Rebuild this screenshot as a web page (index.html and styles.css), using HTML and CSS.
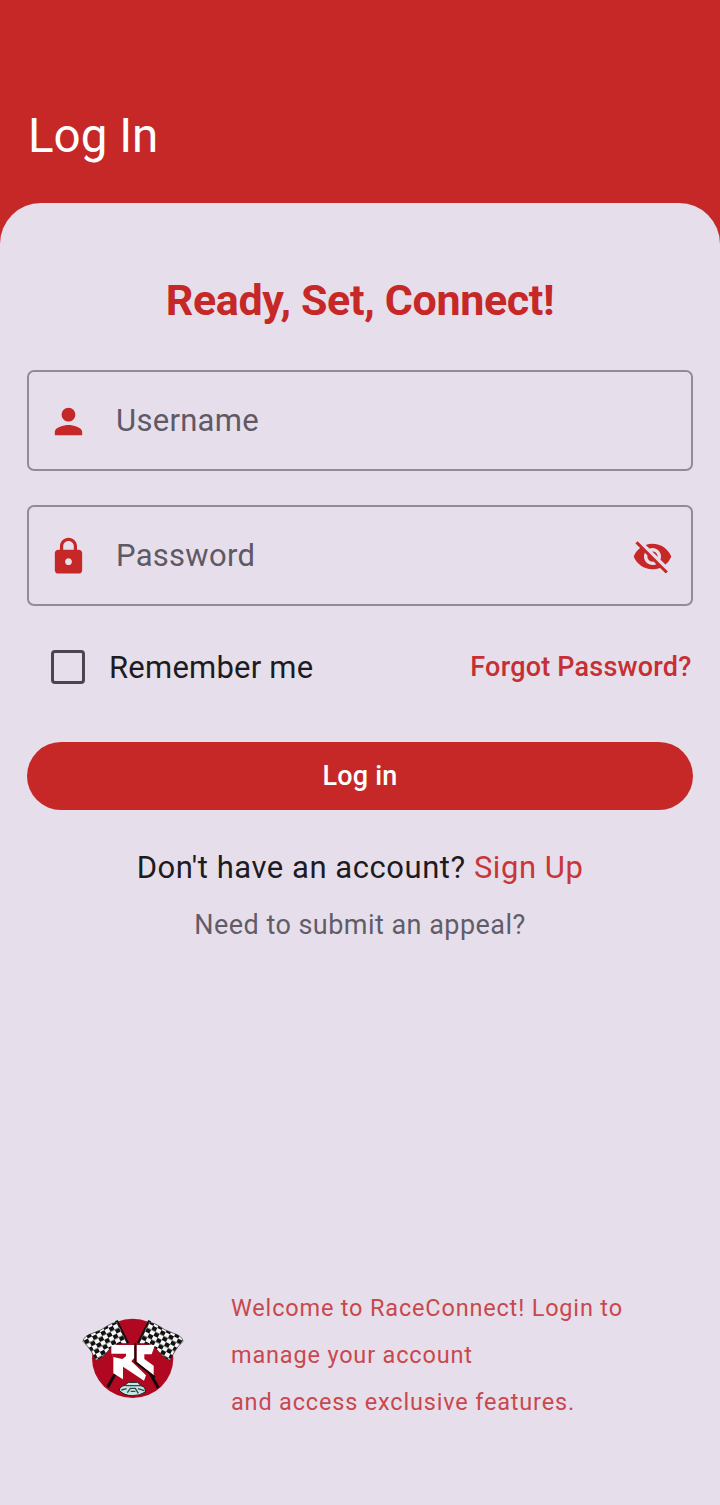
FILE: index.html
```
<!DOCTYPE html>
<html lang="en">
<head>
<meta charset="utf-8">
<title>Log In</title>
<link rel="stylesheet" href="styles.css">
</head>
<body>
<div class="screen">
  <header class="header"><h1 class="header-title">Log In</h1></header>
  <main class="card">
    <h2 class="tagline">Ready, Set, Connect!</h2>
    <div class="field">
      <svg class="icon" viewBox="0 0 24 24"><path d="M12 12c2.21 0 4-1.79 4-4s-1.79-4-4-4-4 1.79-4 4 1.79 4 4 4zm0 2c-2.67 0-8 1.34-8 4v2h16v-2c0-2.66-5.33-4-8-4z"/></svg>
      <span class="field-label">Username</span>
    </div>
    <div class="field">
      <svg class="icon" viewBox="0 0 24 24"><path d="M18 8h-1V6c0-2.76-2.24-5-5-5S7 3.24 7 6v2H6c-1.1 0-2 .9-2 2v10c0 1.1.9 2 2 2h12c1.1 0 2-.9 2-2V10c0-1.100-.9-2-2-2zm-6 9c-1.100 0-2-.9-2-2s.9-2 2-2 2 .9 2 2-.9 2-2 2zm3.100-9H8.900V6c0-1.710 1.390-3.100 3.100-3.100s3.100 1.390 3.100 3.100v2z"/></svg>
      <span class="field-label">Password</span>
      <svg class="icon" viewBox="0 0 24 24"><path d="M12 7c2.760 0 5 2.240 5 5 0 .65-.13 1.260-.36 1.830l2.920 2.920c1.510-1.260 2.700-2.890 3.430-4.750-1.730-4.390-6-7.500-11-7.500-1.400 0-2.740.25-3.980.7l2.160 2.160C10.740 7.130 11.350 7 12 7zM2 4.270l2.280 2.280.46.46C3.080 8.300 1.780 10.020 1 12c1.730 4.390 6 7.500 11 7.500 1.550 0 3.030-.3 4.380-.84l.42.42L19.730 22 21 20.730 3.270 3 2 4.270zM7.530 9.800l1.550 1.550c-.05.21-.08.43-.08.65 0 1.660 1.340 3 3 3 .22 0 .44-.03.65-.08l1.550 1.550c-.67.33-1.410.53-2.200.53-2.760 0-5-2.240-5-5 0-.79.2-1.530.53-2.200zm4.310-.78l3.150 3.150.02-.16c0-1.660-1.340-3-3-3l-.17.01z"/></svg>
    </div>
    <div class="options">
      <span class="checkbox"></span>
      <span class="remember">Remember me</span>
      <a class="forgot">Forgot Password?</a>
    </div>
    <button class="login">Log in</button>
    <p class="signup">Don't have an account? <a class="signup-link">Sign Up</a></p>
    <p class="appeal">Need to submit an appeal?</p>
    <footer class="footer">
      <svg class="logo" viewBox="0 0 348 294">
        <defs>
          <pattern id="check" width="28" height="26" patternUnits="userSpaceOnUse" patternTransform="translate(26 98) rotate(-27)">
            <rect width="28" height="26" fill="#f6f6f6"/><path d="M0 0h14v13H0zM14 13h14v13H14z" fill="#111"/>
          </pattern>
        </defs>
        <ellipse cx="173" cy="151" rx="122" ry="119" fill="#b00820"/>
        <path d="M124 38L158 106M120 198L98 238" fill="none" stroke="#16090b" stroke-width="9"/>
        <path d="M24 100Q26 84 52 76Q82 66 96 54Q108 46 126 42L157 108Q126 103 107 119Q86 148 62 157Q50 125 24 100Z" fill="url(#check)" stroke="#222" stroke-width="2"/>
        <g transform="translate(348 0) scale(-1 1)">
          <path d="M124 38L158 106M126 190L98 240" fill="none" stroke="#16090b" stroke-width="9"/>
          <path d="M24 100Q26 84 52 76Q82 66 96 54Q108 46 126 42L157 108Q126 103 107 119Q86 148 62 157Q50 125 24 100Z" fill="url(#check)" stroke="#222" stroke-width="2"/>
        </g>
        <path d="M109 111H178V149L169 160 213 202 207 218 160 187 144 176V214L115 196V148L109 136Z" fill="#fff"/>
        <path d="M109 137H153V145L142 153 115 147Z" fill="#b00820"/>
        <path d="M185 111H240L230 139H208V153L236 173V204L185 163Z" fill="#fff"/>
        <path d="M181 106V162L240 208" fill="none" stroke="#16090b" stroke-width="6"/>
        <path d="M133 247Q134 235 150 232L160 223H188L198 233Q213 237 211 252Q196 263 172 263Q147 263 133 247Z" fill="#c9e4e2" stroke="#172020" stroke-width="3"/>
        <path d="M151 233H199M139 246L155 242M208 248L189 242M157 254L166 241H181L190 256M167 250H181" fill="none" stroke="#29494a" stroke-width="4"/>
      </svg>
      <p class="welcome">Welcome to RaceConnect! Login to<br>manage your account<br>and access exclusive features.</p>
    </footer>
  </main>
</div>
</body>
</html>
```

FILE: styles.css
```
* { box-sizing: border-box; }
body { margin: 0; background: #c62828; font-family: Roboto, sans-serif; }
h1, h2, p { margin: 0; }
.screen { display: flex; flex-direction: column; height: 1505px; }
.header { height: 203px; padding: 108px 28px 0; }
.header-title { font-size: 47.5px; line-height: 56px; font-weight: 400; color: #fff; }
.card { flex: 1; display: flex; flex-direction: column; padding: 69px 27px 0; background: #e6dfeb; border-radius: 41px 41px 0 0; }
.tagline { height: 56px; line-height: 56px; text-align: center; font-size: 43px; font-weight: 700; color: #c62828; letter-spacing: -.36px; }
.field { display: flex; align-items: center; height: 101px; margin-top: 42px; padding: 2px 18px 0 19px; border: 2px solid #938b9a; border-radius: 7px; }
.field + .field { margin-top: 34px; }
.icon { width: 41px; height: 41px; fill: #c62828; flex: none; }
.field-label { flex: 1; margin: -2px 0 0 27px; font-size: 31px; line-height: 40px; color: #5f5966; letter-spacing: .28px; }
.options { display: flex; align-items: center; height: 40px; margin-top: 41px; padding: 0 1.5px 0 24px; }
.checkbox { width: 34px; height: 34px; border: 3px solid #4b4552; border-radius: 4px; }
.remember { flex: 1; margin-left: 24px; font-size: 31px; color: #1d1b20; letter-spacing: .22px; }
.forgot { font-size: 27px; font-weight: 500; color: #c62f33; letter-spacing: .2px; }
.login { height: 68px; margin-top: 55px; padding: 0; border: 0; border-radius: 34px; background: #c62828; color: #fff; font: 500 27px Roboto, sans-serif; letter-spacing: .2px; }
.signup { margin-top: 38px; text-align: center; font-size: 31px; line-height: 40px; color: #1d1b20; letter-spacing: .54px; white-space: nowrap; }
.signup-link { color: #c9363a; }
.appeal { margin-top: 17px; text-align: center; font-size: 27px; line-height: 40px; color: #625c69; letter-spacing: .46px; }
.footer { display: flex; align-items: center; height: 141px; margin-top: 340px; padding-left: 48px; }
.logo { width: 116px; height: 98px; margin-top: 3px; }
.welcome { margin-left: 40px; font-size: 23.5px; line-height: 47px; color: #c9484e; letter-spacing: .82px; white-space: nowrap; }
```
